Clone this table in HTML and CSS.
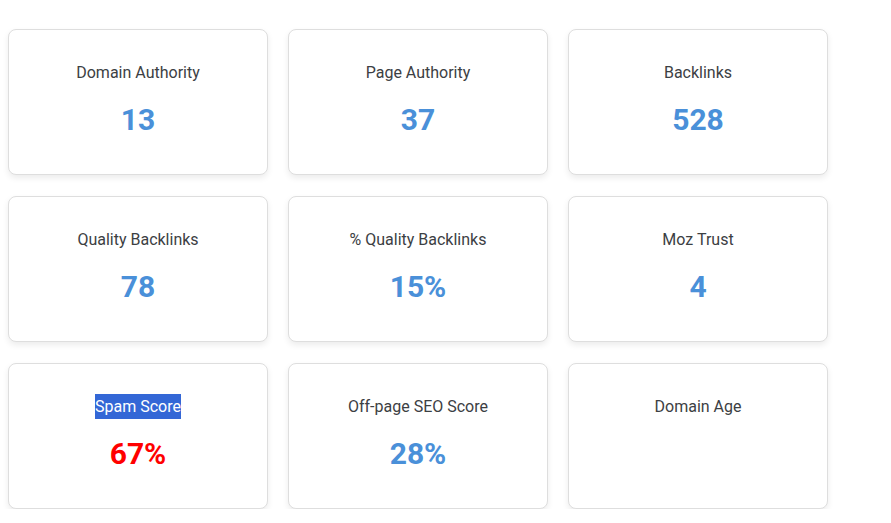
FILE: index.html
```html
<!DOCTYPE html>
<html lang="en">
<head>
<meta charset="utf-8">
<title>SEO Metrics</title>
<link rel="stylesheet" href="styles.css">
</head>
<body>
<div class="grid">
  <div class="card"><div class="label">Domain Authority</div><div class="value">13</div></div>
  <div class="card"><div class="label">Page Authority</div><div class="value">37</div></div>
  <div class="card"><div class="label">Backlinks</div><div class="value">528</div></div>
  <div class="card"><div class="label">Quality Backlinks</div><div class="value">78</div></div>
  <div class="card"><div class="label">% Quality Backlinks</div><div class="value">15%</div></div>
  <div class="card"><div class="label">Moz Trust</div><div class="value">4</div></div>
  <div class="card"><div class="label"><span class="selected">Spam Score</span></div><div class="value danger">67%</div></div>
  <div class="card"><div class="label">Off-page SEO Score</div><div class="value">28%</div></div>
  <div class="card"><div class="label">Domain Age</div><div class="value"></div></div>
</div>
</body>
</html>
```
FILE: styles.css
```css
html, body {
  margin: 0;
  padding: 0;
  background: #ffffff;
}
body {
  padding: 29px 8px 0 8px;
  font-family: Roboto, "Liberation Sans", sans-serif;
}
.grid {
  display: grid;
  grid-template-columns: repeat(3, 260px);
  grid-auto-rows: 146px;
  column-gap: 20px;
  row-gap: 21px;
}
.card {
  box-sizing: border-box;
  border: 1px solid #dedede;
  border-radius: 8px;
  background: #fff;
  box-shadow: 0 3px 6px rgba(0, 0, 0, 0.08);
  padding-top: 31px;
  text-align: center;
}
.label {
  font-size: 16px;
  line-height: 24px;
  color: #3c4043;
}
.selected {
  background: #3367d6;
  color: #ffffff;
  padding: 3px 0;
}
.value {
  margin-top: 17px;
  font-size: 30px;
  line-height: 36px;
  font-weight: 700;
  color: #4a90d9;
  min-height: 36px;
}
.value.danger {
  color: #ff0000;
}
```
